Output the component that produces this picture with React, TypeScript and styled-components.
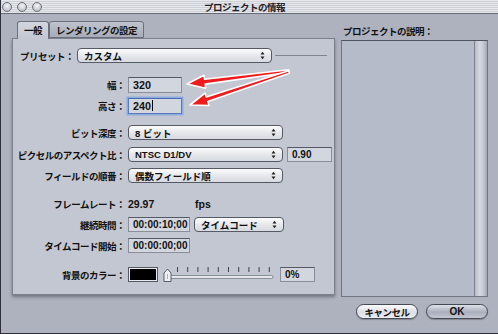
import React from 'react'
import styled, { createGlobalStyle } from 'styled-components'

const GlobalStyle = createGlobalStyle`
  html, body {
    margin: 0;
    padding: 0;
    background: #aeb2bf;
  }
  body {
    font-family: "Liberation Sans", "Noto Sans CJK JP", sans-serif;
    font-size: 9px;
    color: #111;
  }
`

const Window = styled.div`
  position: relative;
  width: 498px;
  height: 334px;
  box-sizing: border-box;
  background: #aeb2bf;
  border-left: 1px solid #2c2f38;
  border-bottom: 1px solid #2c2f38;
  display: flex;
  flex-direction: column;
  overflow: hidden;
`

const TitleBar = styled.div`
  flex: none;
  height: 13px;
  border-bottom: 1px solid #666a76;
  background: repeating-linear-gradient(to bottom, #e6e8ec 0 1px, #cdd0d7 1px 2px);
  display: grid;
  grid-template-columns: 1fr auto 1fr;
  align-items: center;
  padding-right: 10px;
`

const Lights = styled.div`
  display: flex;
  gap: 5px;
  padding-left: 1px;
`

const Light = styled.span`
  width: 8px;
  height: 8px;
  border-radius: 50%;
  border: 1px solid #6d717c;
  background: radial-gradient(circle at 50% 35%, #f4f5f7, #c2c5cd 70%);
`

const Title = styled.div`
  font-weight: bold;
  font-size: 9.5px;
  letter-spacing: -0.5px;
  color: #1f2026;
  white-space: nowrap;
`

const Body = styled.div`
  flex: 1;
  display: flex;
  flex-direction: column;
  padding: 7px 0 0 11px;
`

const Main = styled.div`
  display: flex;
  gap: 6px;
`

const LeftCol = styled.div`
  width: 323px;
  display: flex;
  flex-direction: column;
`

const TabBar = styled.div`
  display: flex;
  align-items: flex-end;
  height: 17px;
  padding-left: 5px;
`

const Tab = styled.div<{ $active?: boolean }>`
  position: relative;
  z-index: ${p => (p.$active ? 1 : 0)};
  box-sizing: border-box;
  height: ${p => (p.$active ? '18px' : '17px')};
  margin-bottom: ${p => (p.$active ? '-1px' : '0')};
  padding: 0 6px;
  display: flex;
  align-items: center;
  font-weight: bold;
  font-size: 9.5px;
  letter-spacing: -0.5px;
  white-space: nowrap;
  border: 1px solid #6b6f7b;
  border-bottom: ${p => (p.$active ? 'none' : '1px solid #6b6f7b')};
  border-radius: 3px 3px 0 0;
  background: ${p =>
    p.$active
      ? 'linear-gradient(#d3d6de, #c3c7d2)'
      : 'linear-gradient(#bfc3cd, #a8acb8)'};
  padding-bottom: ${p => (p.$active ? '1px' : '0')};
`

const Panel = styled.div`
  box-sizing: border-box;
  height: 257px;
  background: #c3c7d2;
  border: 1px solid #7c808c;
  box-shadow: 0 2px 3px rgba(0, 0, 0, 0.35);
  padding: 9px 4px 0 4px;
  display: flex;
  flex-direction: column;
`

const RightCol = styled.div`
  width: 147px;
  display: flex;
  flex-direction: column;
`

const DescLabel = styled.div`
  font-weight: bold;
  font-size: 9.5px;
  letter-spacing: -0.5px;
  height: 12px;
  line-height: 12px;
  margin: 5px 0 0 2px;
  white-space: nowrap;
`

const TextArea = styled.div`
  box-sizing: border-box;
  height: 257px;
  margin-top: 2px;
  background: #b6bbca;
  border: 1px solid #70747f;
  border-top-color: #4f535e;
  display: flex;
  justify-content: flex-end;
`

const Scroller = styled.div`
  width: 12px;
  border-left: 1px solid #7e828e;
  background: linear-gradient(to right, #b8bcc7, #d6d9e0 40%, #c4c8d1 70%, #a3a7b3);
`

const ButtonRow = styled.div`
  display: flex;
  justify-content: flex-end;
  gap: 8px;
  padding-right: 10px;
  margin-top: 7px;
`

const Button = styled.div<{ $default?: boolean }>`
  box-sizing: border-box;
  width: 62px;
  height: 15px;
  border-radius: 8px;
  border: 1px solid #454954;
  display: flex;
  align-items: center;
  justify-content: center;
  font-weight: bold;
  font-size: ${p => (p.$default ? '10px' : '9.5px')};
  letter-spacing: ${p => (p.$default ? '0' : '-0.5px')};
  background: ${p =>
    p.$default
      ? 'linear-gradient(#dfe2e8, #a9aebb 55%, #c3c7d1)'
      : 'linear-gradient(#fbfbfc, #dcdee4 55%, #eceef1)'};
  box-shadow: 0 1px 1px rgba(0, 0, 0, 0.25);
`

const Row = styled.div<{ $gap: number }>`
  display: flex;
  align-items: center;
  height: 15px;
  margin-top: ${p => p.$gap}px;
`

const Label = styled.div<{ $w?: number; $pad?: number }>`
  flex: none;
  box-sizing: border-box;
  width: ${p => p.$w ?? 108}px;
  padding-left: ${p => p.$pad ?? 0}px;
  margin-right: 3px;
  text-align: ${p => (p.$pad ? 'left' : 'right')};
  font-weight: bold;
  font-size: 9.5px;
  letter-spacing: -0.5px;
  white-space: nowrap;
`

const Popup = styled.div<{ $w: number; $ml?: number }>`
  flex: none;
  box-sizing: border-box;
  width: ${p => p.$w}px;
  height: 15px;
  margin-left: ${p => p.$ml ?? 0}px;
  padding: 0 6px 0 6px;
  border: 1px solid #555964;
  border-radius: 4px;
  background: linear-gradient(#fcfcfd, #e6e8ec 50%, #d7dae1);
  display: flex;
  align-items: center;
  justify-content: space-between;
  font-weight: bold;
  font-size: 9.5px;
  white-space: nowrap;
`

const Field = styled.div<{ $w: number; $ml?: number; $focus?: boolean; $fs?: number }>`
  flex: none;
  box-sizing: border-box;
  width: ${p => p.$w}px;
  height: ${p => (p.$fs ? 16 : 15)}px;
  margin-left: ${p => p.$ml ?? 0}px;
  padding-left: 4px;
  background: #d2d6df;
  border: 1px solid ${p => (p.$focus ? '#587bbd' : '#8a8e99')};
  border-top-color: ${p => (p.$focus ? '#4a6cb0' : '#555964')};
  box-shadow: ${p => (p.$focus ? '0 0 0 1.5px #8eabe0' : 'none')};
  display: flex;
  align-items: center;
  font-weight: bold;
  font-size: ${p => p.$fs ?? 10}px;
  white-space: nowrap;
`

const Caret = styled.span`
  width: 1px;
  height: 11px;
  margin-left: 1px;
  background: #000;
`

const Rule = styled.div`
  flex: 1;
  height: 1px;
  background: #80848f;
  margin: 0 3px 1px 3px;
`

const Value = styled.div<{ $w?: number }>`
  width: ${p => p.$w ?? 67}px;
  font-weight: bold;
  font-size: 10.5px;
`

const Swatch = styled.div`
  flex: none;
  box-sizing: border-box;
  width: 30px;
  height: 15px;
  border: 1px solid #555964;
  box-shadow: inset 0 0 0 1px #e8e9ee;
  background: #000;
`

const SliderBox = styled.svg`
  flex: none;
  margin-left: 5px;
`

const Arrows = styled.svg`
  position: absolute;
  left: 0;
  top: 0;
  pointer-events: none;
`

function Stepper() {
  return (
    <svg width="5" height="9" viewBox="0 0 5 9">
      <path d="M0.5 3.5 L2.5 0.8 L4.5 3.5 Z" fill="#222" />
      <path d="M0.5 5.5 L2.5 8.2 L4.5 5.5 Z" fill="#222" />
    </svg>
  )
}

function Select({ w, ml, children }: { w: number; ml?: number; children: React.ReactNode }) {
  return (
    <Popup $w={w} $ml={ml}>
      <span>{children}</span>
      <Stepper />
    </Popup>
  )
}

function Slider() {
  const ticks = Array.from({ length: 10 }, (_, i) => 14 + i * 10.2)
  return (
    <SliderBox width="112" height="16" viewBox="0 0 112 16">
      {ticks.map(x => (
        <rect key={x} x={x} y="0" width="1" height="5" fill="#3d404a" />
      ))}
      <rect x="4" y="8.5" width="106" height="3" rx="1.5" fill="#e4e6eb" stroke="#777b87" strokeWidth="0.8" />
      <path d="M1 14.5 L1 6 L4.5 2 L8 6 L8 14.5 Z" fill="#eef0f3" stroke="#4a4e59" strokeWidth="0.9" strokeLinejoin="round" />
      <line x1="4.5" y1="7" x2="4.5" y2="12" stroke="#9a9ea9" strokeWidth="0.8" />
    </SliderBox>
  )
}

// red call-out arrow: tapered shaft from tail (tx,ty) to tip (px,py)
function arrow(tx: number, ty: number, px: number, py: number) {
  const head = 18
  const hw = 6.5
  const sw = 2.4
  const tw = 1.3
  const dx = px - tx
  const dy = py - ty
  const len = Math.hypot(dx, dy)
  const ux = dx / len
  const uy = dy / len
  const nx = -uy
  const ny = ux
  const bx = px - ux * head
  const by = py - uy * head
  const pts = [
    [px, py],
    [bx + nx * hw, by + ny * hw],
    [bx + nx * sw, by + ny * sw],
    [tx + nx * tw, ty + ny * tw],
    [tx - nx * tw, ty - ny * tw],
    [bx - nx * sw, by - ny * sw],
    [bx - nx * hw, by - ny * hw],
  ]
  return pts.map(p => p.map(v => v.toFixed(1)).join(',')).join(' ')
}

export default function App() {
  return (
    <>
      <GlobalStyle />
      <Window>
        <TitleBar>
          <Lights>
            <Light />
            <Light />
            <Light />
          </Lights>
          <Title>プロジェクトの情報</Title>
          <span />
        </TitleBar>

        <Body>
          <Main>
            <LeftCol>
              <TabBar>
                <Tab $active>一般</Tab>
                <Tab>レンダリングの設定</Tab>
              </TabBar>
              <Panel>
                <Row $gap={0}>
                  <Label $w={60} $pad={3}>プリセット：</Label>
                  <Select w={195} ml={-3}>カスタム</Select>
                  <Rule />
                </Row>

                <Row $gap={14}>
                  <Label>幅：</Label>
                  <Field $w={54} $fs={10.8}>320</Field>
                </Row>
                <Row $gap={6}>
                  <Label>高さ：</Label>
                  <Field $w={54} $fs={10.8} $focus>
                    240
                    <Caret />
                  </Field>
                </Row>

                <Row $gap={12}>
                  <Label>ビット深度：</Label>
                  <Select w={155}>8 ビット</Select>
                </Row>
                <Row $gap={7}>
                  <Label>ピクセルのアスペクト比：</Label>
                  <Select w={155}>NTSC D1/DV</Select>
                  <Field $w={45} $ml={4}>0.90</Field>
                </Row>
                <Row $gap={6}>
                  <Label>フィールドの順番：</Label>
                  <Select w={155}>偶数フィールド順</Select>
                </Row>

                <Row $gap={13}>
                  <Label>フレームレート：</Label>
                  <Value>29.97</Value>
                  <Value $w={30}>fps</Value>
                </Row>
                <Row $gap={6}>
                  <Label>継続時間：</Label>
                  <Field $w={62}>00:00:10;00</Field>
                  <Select w={90} ml={4}>タイムコード</Select>
                </Row>
                <Row $gap={6}>
                  <Label>タイムコード開始：</Label>
                  <Field $w={62}>00:00:00;00</Field>
                </Row>

                <Row $gap={14}>
                  <Label>背景のカラー：</Label>
                  <Swatch />
                  <Slider />
                  <Field $w={35} $ml={5}>0%</Field>
                </Row>
              </Panel>
            </LeftCol>

            <RightCol>
              <DescLabel>プロジェクトの説明：</DescLabel>
              <TextArea>
                <Scroller />
              </TextArea>
            </RightCol>
          </Main>

          <ButtonRow>
            <Button>キャンセル</Button>
            <Button $default>OK</Button>
          </ButtonRow>
        </Body>

        <Arrows width="498" height="334" viewBox="0 0 498 334">
          <polygon points={arrow(288, 71, 186, 84)} fill="#ee1c1c" stroke="#fff" strokeWidth="1.6" strokeLinejoin="round" />
          <polygon points={arrow(288, 72, 189, 105)} fill="#ee1c1c" stroke="#fff" strokeWidth="1.6" strokeLinejoin="round" />
        </Arrows>
      </Window>
    </>
  )
}
